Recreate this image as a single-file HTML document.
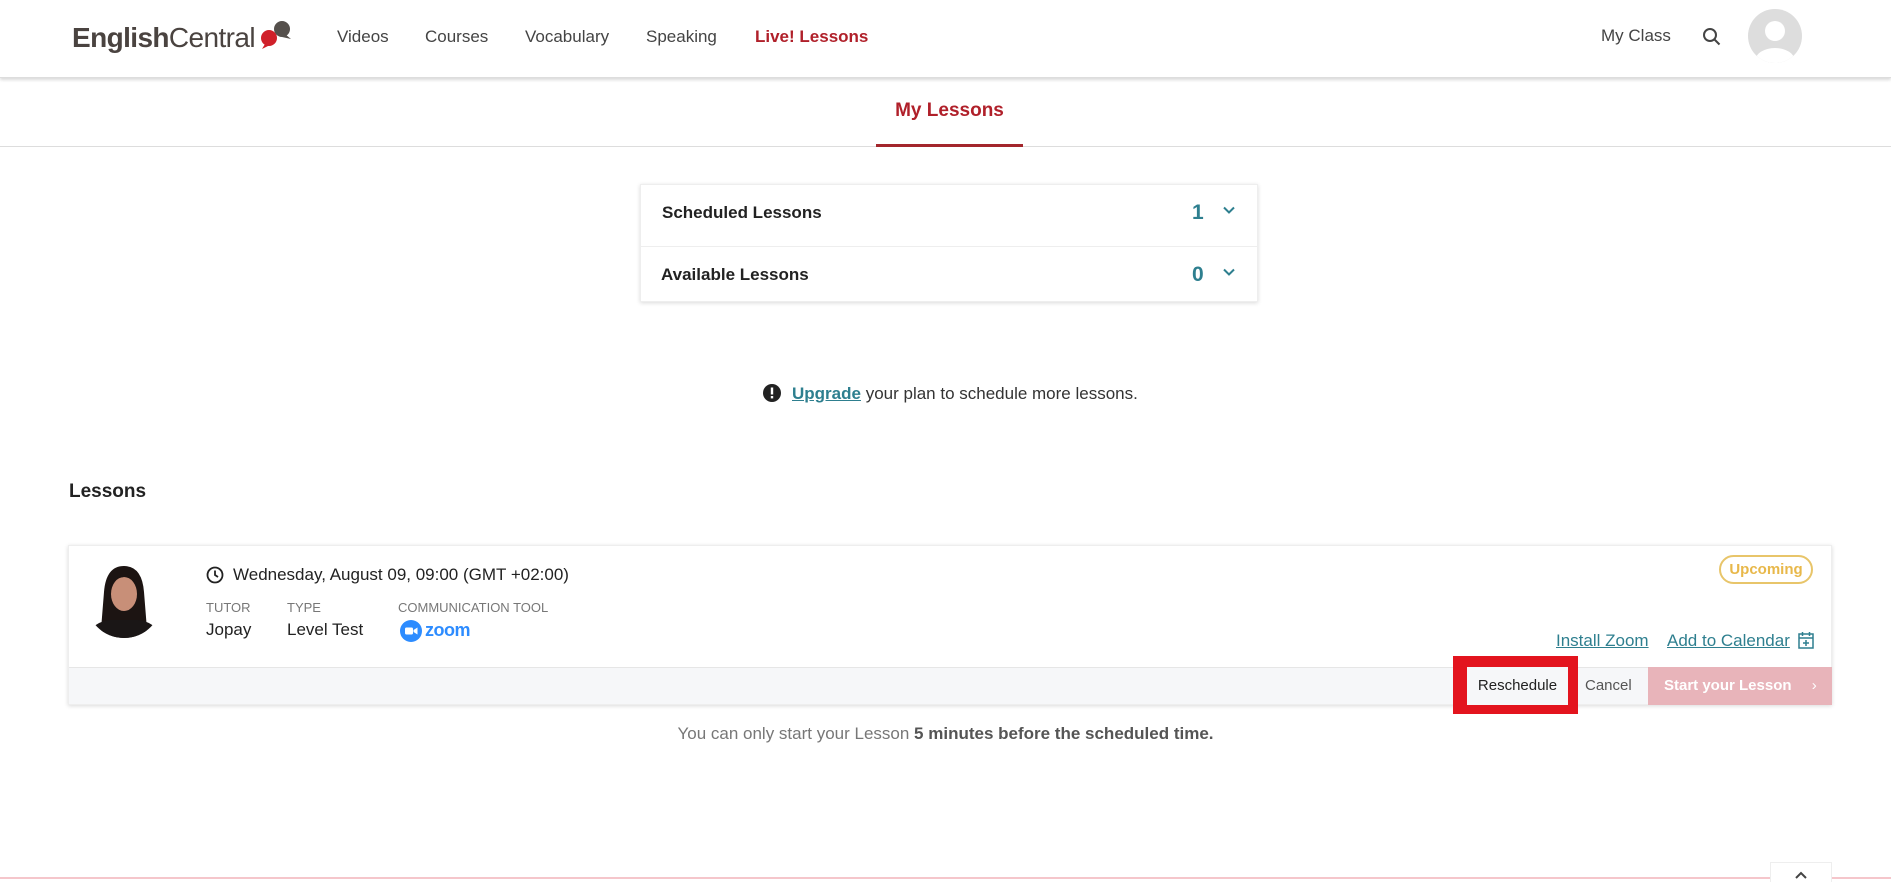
<!DOCTYPE html>
<html><head><meta charset="utf-8"><style>
*{margin:0;padding:0;box-sizing:border-box}
body{width:1891px;height:879px;overflow:hidden;background:#fff;font-family:"Liberation Sans",Arial,sans-serif;position:relative;color:#333}
.a{position:absolute;white-space:nowrap}
.nav{font-size:17px;color:#444;top:27px}
</style></head><body>
<div class="a" style="left:0;top:0;width:1891px;height:78px;background:#fff;box-shadow:0 2px 3px rgba(0,0,0,.15);border-bottom:1px solid #ddd"></div>
<div class="a" style="left:72px;top:22px;font-size:28px;color:#4a4340;letter-spacing:-0.6px"><b style="font-weight:700">English</b><span style="font-weight:400">Central</span></div>
<svg class="a" style="left:256px;top:20px" width="38" height="30" viewBox="0 0 38 30"><circle cx="26" cy="9" r="8" fill="#55504c"/><path d="M29 14l6 5-9-2z" fill="#55504c"/><circle cx="13" cy="18" r="8" fill="#d0202a"/><path d="M9 24l-3 5 8-4z" fill="#d0202a"/></svg>
<div class="a nav" style="left:337px">Videos</div>
<div class="a nav" style="left:425px">Courses</div>
<div class="a nav" style="left:525px">Vocabulary</div>
<div class="a nav" style="left:646px">Speaking</div>
<div class="a nav" style="left:755px;color:#b0202a;font-weight:700">Live! Lessons</div>
<div class="a nav" style="left:1601px;top:26px">My Class</div>
<svg class="a" style="left:1702px;top:27px" width="20" height="20" viewBox="0 0 20 20"><circle cx="8" cy="8" r="6" fill="none" stroke="#444" stroke-width="2"/><path d="M12.5 12.5l5 5" stroke="#444" stroke-width="2"/></svg>
<svg class="a" style="left:1748px;top:9px" width="54" height="54" viewBox="0 0 54 54"><defs><clipPath id="c"><circle cx="27" cy="27" r="27"/></clipPath></defs><circle cx="27" cy="27" r="27" fill="#ddd"/><g clip-path="url(#c)"><circle cx="27" cy="22" r="10" fill="#fff"/><ellipse cx="27" cy="52" rx="20" ry="13" fill="#fff"/></g></svg>
<div class="a" style="left:0;top:146px;width:1891px;height:1px;background:#ddd"></div>
<div class="a" style="left:876px;top:100px;width:147px;text-align:center;font-size:19px;font-weight:700;color:#b0202a">My Lessons</div>
<div class="a" style="left:876px;top:144px;width:147px;height:3px;background:#a3262c"></div>
<div class="a" style="left:640px;top:184px;width:618px;height:118px;border:1px solid #eee;box-shadow:0 1px 4px rgba(0,0,0,.15);background:#fff"></div>
<div class="a" style="left:641px;top:246px;width:616px;height:1px;background:#eee"></div>
<div class="a" style="left:662px;top:203px;font-size:17px;font-weight:700;color:#222">Scheduled Lessons</div>
<div class="a" style="left:661px;top:265px;font-size:17px;font-weight:700;color:#222">Available Lessons</div>
<div class="a" style="left:1192px;top:201px;font-size:21px;font-weight:700;color:#2e7f8f">1</div>
<div class="a" style="left:1192px;top:263px;font-size:21px;font-weight:700;color:#2e7f8f">0</div>
<svg class="a" style="left:1222px;top:205px" width="14" height="10" viewBox="0 0 14 10"><path d="M2 2.5l5 5 5-5" fill="none" stroke="#2e7f8f" stroke-width="2"/></svg>
<svg class="a" style="left:1222px;top:267px" width="14" height="10" viewBox="0 0 14 10"><path d="M2 2.5l5 5 5-5" fill="none" stroke="#2e7f8f" stroke-width="2"/></svg>
<svg class="a" style="left:763px;top:384px" width="18" height="18" viewBox="0 0 18 18"><circle cx="9" cy="9" r="9" fill="#222"/><rect x="7.8" y="3.5" width="2.4" height="7" fill="#fff"/><rect x="7.8" y="12" width="2.4" height="2.4" fill="#fff"/></svg>
<div class="a" style="left:792px;top:384px;font-size:17px;color:#333"><span style="color:#2e7f8f;font-weight:700;text-decoration:underline">Upgrade</span> your plan to schedule more lessons.</div>
<div class="a" style="left:69px;top:481px;font-size:19px;font-weight:700;color:#222">Lessons</div>
<div class="a" style="left:68px;top:545px;width:1764px;height:160px;border:1px solid #eee;box-shadow:0 1px 4px rgba(0,0,0,.15);background:#fff"></div>
<div class="a" style="left:69px;top:667px;width:1762px;height:37px;background:#f6f7f9;border-top:1px solid #e6e6e6"></div>
<svg class="a" style="left:86px;top:562px" width="76" height="76" viewBox="0 0 76 76"><defs><clipPath id="p"><circle cx="38" cy="38" r="38"/></clipPath></defs><circle cx="38" cy="38" r="38" fill="#fff"/><g clip-path="url(#p)"><path d="M14 80 L18 30 Q20 4 38 4 Q56 4 58 30 L62 80z" fill="#1c1412"/><ellipse cx="38" cy="32" rx="13" ry="17" fill="#c88f78"/><path d="M0 80 Q4 60 24 58 L52 58 Q72 60 76 80z" fill="#1a1616"/><path d="M25 22 Q38 8 51 22 Q46 14 38 14 Q30 14 25 22z" fill="#1c1412"/></g></svg>
<svg class="a" style="left:206px;top:566px" width="18" height="18" viewBox="0 0 18 18"><circle cx="9" cy="9" r="7.5" fill="none" stroke="#222" stroke-width="1.8"/><path d="M9 4.5V9l3 2" fill="none" stroke="#222" stroke-width="1.8"/></svg>
<div class="a" style="left:233px;top:565px;font-size:17px;color:#222">Wednesday, August 09, 09:00 (GMT +02:00)</div>
<div class="a" style="left:206px;top:600px;font-size:13px;color:#777">TUTOR</div>
<div class="a" style="left:287px;top:600px;font-size:13px;color:#777">TYPE</div>
<div class="a" style="left:398px;top:600px;font-size:13px;color:#777">COMMUNICATION TOOL</div>
<div class="a" style="left:206px;top:620px;font-size:17px;color:#222">Jopay</div>
<div class="a" style="left:287px;top:620px;font-size:17px;color:#222">Level Test</div>
<svg class="a" style="left:400px;top:620px" width="22" height="22" viewBox="0 0 22 22"><circle cx="11" cy="11" r="11" fill="#2d8cff"/><rect x="5" y="7.5" width="8" height="7" rx="1.5" fill="#fff"/><path d="M13.5 10l4-2.5v7l-4-2.5z" fill="#fff"/></svg>
<div class="a" style="left:425px;top:620px;font-size:18px;font-weight:700;color:#2d8cff;letter-spacing:-0.5px">zoom</div>
<div class="a" style="left:1719px;top:555px;width:94px;height:29px;border:2px solid #e8c56a;border-radius:15px;text-align:center;line-height:25px;font-size:15px;font-weight:700;color:#e8b84a">Upcoming</div>
<div class="a" style="left:1556px;top:631px;font-size:17px;color:#2e7f8f;text-decoration:underline">Install Zoom</div>
<div class="a" style="left:1667px;top:631px;font-size:17px;color:#2e7f8f;text-decoration:underline">Add to Calendar</div>
<svg class="a" style="left:1798px;top:631px" width="16" height="18" viewBox="0 0 16 18"><rect x="1" y="3" width="14" height="14" fill="none" stroke="#2e7f8f" stroke-width="1.5"/><path d="M1 7h14M4.5 1v4M11.5 1v4M8 9v6M5 12h6" stroke="#2e7f8f" stroke-width="1.5"/></svg>
<div class="a" style="left:1453px;top:656px;width:125px;height:58px;background:#e3141e"></div>
<div class="a" style="left:1467px;top:667px;width:101px;height:38px;background:#f6f7f9;text-align:center;line-height:38px;font-size:15px;color:#222">Reschedule</div>
<div class="a" style="left:1585px;top:667px;height:38px;line-height:38px;font-size:15px;color:#555">Cancel</div>
<div class="a" style="left:1648px;top:667px;width:184px;height:38px;background:#e8b4ba;line-height:38px;padding-left:16px;font-size:15px;font-weight:700;color:#fff">Start your Lesson <span style="margin-left:16px;font-weight:400">›</span></div>
<div class="a" style="left:0;width:1891px;top:724px;text-align:center;font-size:17px;color:#777">You can only start your Lesson <b style="color:#555">5 minutes before the scheduled time.</b></div>
<div class="a" style="left:0;top:877px;width:1891px;height:2px;background:#f5c6cb"></div>
<div class="a" style="left:1770px;top:862px;width:62px;height:20px;background:#fff;border:1px solid #eee;border-bottom:none"></div>
<svg class="a" style="left:1794px;top:871px" width="14" height="8" viewBox="0 0 14 8"><path d="M2 7l5-5 5 5" fill="none" stroke="#444" stroke-width="2"/></svg>
</body></html>
